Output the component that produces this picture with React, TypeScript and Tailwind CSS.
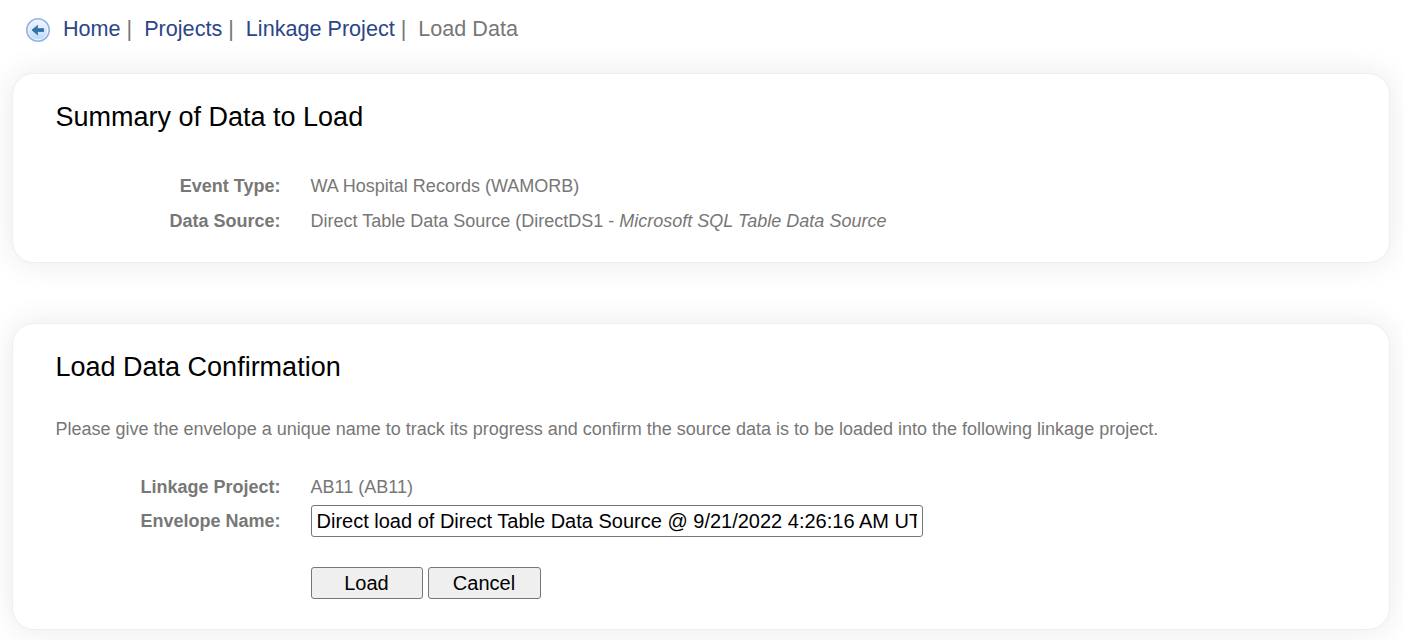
import type { ReactNode } from "react";

function BackIcon() {
  return (
    <svg width="26" height="26" viewBox="0 0 26 26" aria-hidden="true">
      <defs>
        <linearGradient id="disc" x1="0" y1="0" x2="0" y2="1">
          <stop offset="0" stopColor="#eef5ff" />
          <stop offset="0.5" stopColor="#dceafd" />
          <stop offset="1" stopColor="#b4d3fb" />
        </linearGradient>
      </defs>
      <circle cx="13" cy="13" r="11.2" fill="url(#disc)" stroke="#94b4e2" strokeWidth="1.6" />
      <circle cx="13" cy="13" r="9.8" fill="none" stroke="#edf5ff" strokeWidth="1" />
      <path
        d="M7 13.1L12.6 8.4L12.2 11.7H18.6V14.5H12.2L12.6 17.8Z"
        fill="#3470a8"
        stroke="#3470a8"
        strokeWidth="0.9"
        strokeLinejoin="round"
      />
    </svg>
  );
}

function Card({ title, className, children }: { title: string; className: string; children: ReactNode }) {
  return (
    <section
      className={`rounded-[22px] border border-[#efeff0] bg-white pl-[42.5px] shadow-[0_0_30px_rgba(50,50,93,0.10)] ${className}`}
    >
      <h2 className="pt-[23px] text-[27px] leading-10 text-black">{title}</h2>
      {children}
    </section>
  );
}

function Row({ label, children }: { label: string; children: ReactNode }) {
  return (
    <div className="flex">
      <div className="w-[225px] shrink-0 text-right font-bold">{label}</div>
      <div className="ml-[30px]">{children}</div>
    </div>
  );
}

const crumbs = ["Home", "Projects", "Linkage Project"];

export default function App() {
  return (
    <div className="h-[640px] overflow-hidden bg-white font-['Liberation_Sans',Arial,sans-serif] text-[18px] leading-[34px] text-[#777]">
      <nav className="flex h-[73px] items-start pl-[25px] pt-[16px] text-[21.6px] leading-[26px]">
        <div className="mr-3 mt-px">
          <BackIcon />
        </div>
        {crumbs.map((c) => (
          <div key={c} className="mr-[12px] flex">
            <a href="#" className="mr-[6px] text-[#2b4688]">{c}</a>
            <span>|</span>
          </div>
        ))}
        <span>Load Data</span>
      </nav>

      <Card title="Summary of Data to Load" className="mx-3 h-[190px] w-[1378px]">
        <div className="flex flex-col gap-px pt-[32px]">
          <Row label="Event Type:">WA Hospital Records (WAMORB)</Row>
          <Row label="Data Source:">
            Direct Table Data Source (DirectDS1 - <em>Microsoft SQL Table Data Source</em>
          </Row>
        </div>
      </Card>

      <Card title="Load Data Confirmation" className="mx-3 mt-[60px] h-[307px] w-[1378px]">
        <p className="pt-[25px]">
          Please give the envelope a unique name to track its progress and confirm the source data is to be loaded into
          the following linkage project.
        </p>
        <div className="pt-[24px]">
          <Row label="Linkage Project:">AB11 (AB11)</Row>
          <Row label="Envelope Name:">
            <input
              className="mt-px block h-8 w-[612px] rounded-[3px] border border-[#767676] bg-white px-[5px] text-[20px] text-black"
              defaultValue="Direct load of Direct Table Data Source @ 9/21/2022 4:26:16 AM UTC"
            />
            <div className="mt-[30px] flex gap-[5px] text-[20px] leading-[30px] text-black">
              <button className="h-8 w-[112px] rounded-[3px] border border-[#767676] bg-[#efefef]">Load</button>
              <button className="h-8 w-[113px] rounded-[3px] border border-[#767676] bg-[#efefef]">Cancel</button>
            </div>
          </Row>
        </div>
      </Card>
    </div>
  );
}
